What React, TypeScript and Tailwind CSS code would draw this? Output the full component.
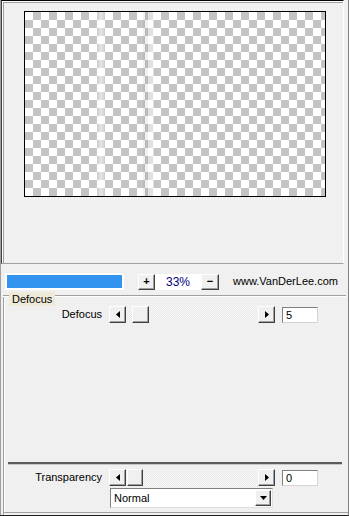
import React from "react";

const btn =
  "box-border bg-[#f0f0f0] border border-t-white border-l-white border-r-[#404040] border-b-[#404040] shadow-[inset_-1px_-1px_0_#a0a0a0] flex items-center justify-center";

function LeftArrow() {
  return (
    <svg width="4" height="7" viewBox="0 0 4 7">
      <path d="M4 0V7L0 3.5Z" fill="#000" />
    </svg>
  );
}
function RightArrow() {
  return (
    <svg width="4" height="7" viewBox="0 0 4 7">
      <path d="M0 0V7L4 3.5Z" fill="#000" />
    </svg>
  );
}
function DownArrow() {
  return (
    <svg width="7" height="4" viewBox="0 0 7 4">
      <path d="M0 0H7L3.5 4Z" fill="#000" />
    </svg>
  );
}

function SliderRow({
  label,
  value,
  thumbOffset,
  mt,
}: {
  label: string;
  value: string;
  thumbOffset: "a" | "b";
  mt: string;
}) {
  return (
    <div className={`flex items-center h-[17px] shrink-0 ${mt}`}>
      <div className="w-[101px] text-right leading-none">{label}</div>
      <div className="ml-[7px] flex h-[17px] w-[166px]">
        <div className={`${btn} w-[17px] h-[17px]`}>
          <LeftArrow />
        </div>
        <div className="flex-1 h-[17px] bg-[repeating-conic-gradient(#e6e6e6_0_25%,#fbfbfb_0_50%)] bg-[length:2px_2px] flex items-center">
          {thumbOffset === "a" ? (
            <div className={`${btn} ml-[6px] w-[17px] h-[17px]`} />
          ) : (
            <div className={`${btn} ml-[1px] w-[16px] h-[17px]`} />
          )}
        </div>
        <div className={`${btn} w-[17px] h-[17px]`}>
          <RightArrow />
        </div>
      </div>
      <div className="ml-[7px] w-[36px] h-[16px] box-border bg-white border border-t-[#808080] border-l-[#808080] border-r-[#d4d4d4] border-b-[#d4d4d4] pl-[3px] leading-[14px]">
        {value}
      </div>
    </div>
  );
}

export default function App() {
  return (
    <div className="w-[349px] h-[516px] box-border bg-[#f0f0f0] text-[11px] text-black font-['Liberation_Sans',Arial,sans-serif] pl-[1px] border-r border-r-[#808080] border-b border-b-[#202020] shadow-[inset_1px_0_0_#a0a0a0] flex flex-col overflow-hidden">
      {/* preview panel */}
      <div className="w-[343px] h-[264px] shrink-0 box-border border-t border-l border-t-black border-l-[#404040] border-r border-r-white border-b border-b-[#a0a0a0] shadow-[inset_1px_1px_0_#ffffff,inset_2px_2px_0_#a0a0a0]">
        <div className="ml-[22px] mt-[10px] w-[302px] h-[186px] box-border border border-black relative bg-[repeating-conic-gradient(#c4c4c4_0_25%,#ffffff_0_50%)] bg-[length:16px_16px]">
          <div className="absolute top-0 bottom-0 left-[71px] w-[10px] bg-gradient-to-r from-transparent via-white/60 to-transparent" />
          <div className="absolute top-0 bottom-0 left-[118px] w-[5px] bg-black/5" />
          <div className="absolute top-0 bottom-0 left-[123px] w-[6px] bg-white/50" />
        </div>
      </div>

      {/* progress row */}
      <div className="mt-[9px] h-[17px] flex items-center shrink-0">
        <div className="ml-[4px] w-[119px] h-[17px] bg-white p-[2px] box-border">
          <div className="w-full h-full bg-[#3394f0]" />
        </div>
        <div className={`${btn} ml-[14px] w-[17px] h-[16px] font-bold text-[11px] leading-none`}>+</div>
        <div className="w-[46px] h-[16px] bg-white text-[#000080] text-[12px] flex items-center justify-center">33%</div>
        <div className={`${btn} w-[18px] h-[16px] font-bold text-[11px] leading-none`}>−</div>
        <div className="ml-[14px] leading-none">www.VanDerLee.com</div>
      </div>

      {/* lower framed section */}
      <div className="mt-[5px] ml-[2px] flex-1 flex flex-col box-border border-l border-l-[#a0a0a0] shadow-[inset_1px_0_0_#ffffff]">
        {/* group box */}
        <div className="w-[343px] h-[166px] shrink-0 box-border border-t border-t-[#a0a0a0] shadow-[inset_0_1px_0_#ffffff] relative -ml-[1px] pl-[1px]">
          <div className="absolute -top-[4px] left-[6px] h-[14px] px-[3px] bg-[#efead8] leading-[14px]">Defocus</div>
          <div className="-ml-[3px]">
            <SliderRow label="Defocus" value="5" thumbOffset="a" mt="mt-[10px]" />
          </div>
        </div>

        {/* separator */}
        <div className="ml-[4px] mt-[1px] w-[334px] h-[3px] shrink-0 border-t-2 border-t-[#5c5c5c] border-b border-b-[#c8c8c8] box-border" />

        <div className="-ml-[3px]">
          <SliderRow label="Transparency" value="0" thumbOffset="b" mt="mt-[4px]" />
        </div>

        {/* select */}
        <div className="ml-[106px] mt-[2px] w-[163px] h-[20px] shrink-0 box-border bg-white border border-t-[#808080] border-l-[#808080] border-r-[#e0e0e0] border-b-[#e0e0e0] flex items-center">
          <div className="flex-1 pl-[3px] leading-none">Normal</div>
          <div className={`${btn} w-[16px] h-[16px] mr-[1px]`}>
            <DownArrow />
          </div>
        </div>

        <div className="mt-auto h-[3px] border-t border-t-[#a0a0a0] shrink-0" />
      </div>
    </div>
  );
}
